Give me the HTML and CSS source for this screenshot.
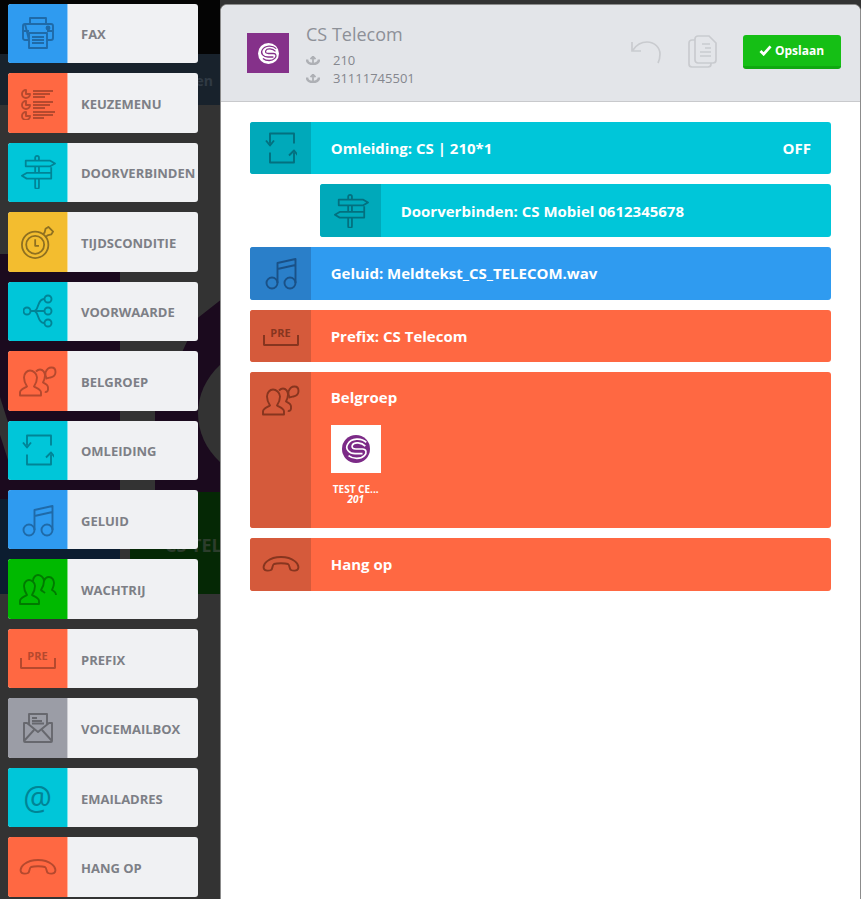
FILE: index.html
```html
<!DOCTYPE html>
<html lang="en">
  <head>
    <meta charset="UTF-8" />
    <meta name="viewport" content="width=device-width, initial-scale=1.0" />
    <title>Belplan</title>
    <link rel="stylesheet" href="styles.css">
  </head>
  <body>
    <svg class="sprite" width="0" height="0">
      <symbol id="i-fax" viewBox="0 0 32 34">
        <path d="M8 8V2h16v6M3 8h26a2 2 0 0 1 2 2v12a2 2 0 0 1-2 2h-4M7 24H3a2 2 0 0 1-2-2V10a2 2 0 0 1 2-2zM7 17h18v15H7zM10 21h12M10 24h12M10 27h12" />
        <path d="M2 15h5M25 15h5" />
        <circle cx="26" cy="12" r="1.500" fill="currentColor" />
      </symbol>
      <symbol id="i-menu" viewBox="0 0 38 32">
        <path d="M7 3a4 4 0 1 0 4 4H7zM14 4h20M14 7h17M14 10h12M7 14a4 4 0 1 0 4 4H7zM14 15h20M14 18h17M14 21h12M7 25a4 4 0 1 0 4 4H7zM14 25h22M14 28h20M14 31h11" />
      </symbol>
      <symbol id="i-sign" viewBox="0 0 38 36">
        <path d="M6 6h26l5 3-5 3H6zM33 13v6H7l-5 3 5 3h26v-6M16 6V3a2 2 0 0 1 4 0v3M16 25v9a2 2 0 0 0 4 0v-9M16 12v7M20 12v7" />
      </symbol>
      <symbol id="i-time" viewBox="0 0 36 36">
        <circle cx="15" cy="21" r="14" />
        <circle cx="15" cy="21" r="9.500" />
        <path d="M15 15v7h4M23 10l2-2 1-4 3-2 5 5-2 3-4 1-2 2" />
      </symbol>
      <symbol id="i-tree" viewBox="0 0 30 32">
        <circle cx="4" cy="16" r="3.500" />
        <circle cx="25" cy="4" r="3.500" />
        <circle cx="25" cy="16" r="3.500" />
        <circle cx="25" cy="28" r="3.500" />
        <path d="M8 16h13M21 4c-7 0-5 12-10 12M21 28c-7 0-5-12-10-12" />
      </symbol>
      <symbol id="i-group" viewBox="0 0 38 31">
        <path d="M1 30v-3c0-3 4-4 7-6-2-3-3-5-3-9 0-4 3-7 6-7s7 3 7 7c0 4-1 6-3 9 3 2 7 3 7 6v3zM17 6c1-1 2-2 4-2 3 0 5 3 5 6 0 3-1 5-2 7 2 1 5 2 5 5v2c0 2-2 3-3 2" />
        <path d="M27.500 13c-1-2-1.500-4-1-6 1-3 3.500-5 6-5s4 2 4 4.500c0 3-2.500 5-5 5.500-1.500.3-3 .5-4 1z" />
      </symbol>
      <symbol id="i-redirect" viewBox="0 0 32 31">
        <path d="M5 11V1h24v10M1 8l4 5 4-5M29 20v10H5V20M24 23l5-5 4 5" />
      </symbol>
      <symbol id="i-music" viewBox="0 0 32 34">
        <circle cx="7" cy="27" r="5.500" />
        <circle cx="25" cy="27" r="5.500" />
        <path d="M12.500 27V7L30.500 3v24M12.500 13l18-4" />
      </symbol>
      <symbol id="i-queue" viewBox="0 0 38 32">
        <path d="M1 31v-3c0-3 4-4 7-6-2-3-3-5-3-9 0-4 3-6 5-6s6 2 6 6c0 4-1 6-3 9 3 2 7 3 7 6v3zM14 8c0-4 3-6 5-6s6 2 6 6c0 4-1 6-3 9 1 1 3 2 4 3M25 8c1-3 3-4 5-4 3 0 5 3 5 6 0 3-1 5-2 7 2 1 4 2 4 5" />
      </symbol>
      <symbol id="i-mail" viewBox="0 0 32 30">
        <path d="M7 11V1h18v10M2 10h3l11 9 11-9h3v18a1 1 0 0 1-1 1H3a1 1 0 0 1-1-1zM2 28l10-11M30 28L20 17M10 5h5M10 8h10M10 10.500h12" />
      </symbol>
      <symbol id="i-phone" viewBox="0 0 38 16">
        <path d="M2 13c-2-5 5-12 17-12s19 7 17 12c-1 2-5 2-7 1-2-1-1-5-3-6-3-1-11-1-14 0-2 1-1 5-3 6-2 1-6 1-7-1z" />
      </symbol>
      <symbol id="i-anchor" viewBox="0 0 14 9">
        <path d="M7 1v6M4.500 3.200L7 .5 9.500 3.200" stroke-width="1.800" />
        <path d="M1 3.500C1 6.500 4 8 7 8s6-1.500 6-4.500" stroke-width="2.600" />
      </symbol>
      <symbol id="i-logo" viewBox="0 0 30 30">
        <circle cx="15" cy="15" r="15" fill="currentColor" stroke="none" />
        <path class="logo-cut" d="M26 8C21 3 10 3 6 10c-3 5 2 10 8 10h8M25 12c-4-4-12-5-14-1-1 3 1 4 4 4h7c4 0 5 4 2 7-4 4-12 4-17 0" />
      </symbol>
    </svg>

    <div class="backdrop">
      <div class="bg-black"></div>
      <div class="bg-navy">en</div>
      <div class="bg-purple">
        <div class="bg-shape"></div>
        <div class="bg-ring"></div>
        <div class="bg-edge"></div>
      </div>
      <div class="bg-blue"></div>
      <div class="bg-green">CS TEL</div>
    </div>

    <aside class="palette">
      <div class="tool tool-blue"><span class="tool-icon"><svg class="ico w32"><use href="#i-fax" /></svg></span><span class="tool-name">Fax</span></div>
      <div class="tool tool-orange"><span class="tool-icon"><svg class="ico w38"><use href="#i-menu" /></svg></span><span class="tool-name">Keuzemenu</span></div>
      <div class="tool tool-cyan"><span class="tool-icon"><svg class="ico w38"><use href="#i-sign" /></svg></span><span class="tool-name">Doorverbinden</span></div>
      <div class="tool tool-yellow"><span class="tool-icon"><svg class="ico w36"><use href="#i-time" /></svg></span><span class="tool-name">Tijdsconditie</span></div>
      <div class="tool tool-cyan"><span class="tool-icon"><svg class="ico w30"><use href="#i-tree" /></svg></span><span class="tool-name">Voorwaarde</span></div>
      <div class="tool tool-orange"><span class="tool-icon"><svg class="ico w38"><use href="#i-group" /></svg></span><span class="tool-name">Belgroep</span></div>
      <div class="tool tool-cyan"><span class="tool-icon"><svg class="ico w32"><use href="#i-redirect" /></svg></span><span class="tool-name">Omleiding</span></div>
      <div class="tool tool-blue"><span class="tool-icon"><svg class="ico w32"><use href="#i-music" /></svg></span><span class="tool-name">Geluid</span></div>
      <div class="tool tool-green"><span class="tool-icon"><svg class="ico w38"><use href="#i-queue" /></svg></span><span class="tool-name">Wachtrij</span></div>
      <div class="tool tool-orange"><span class="tool-icon"><span class="pre">PRE</span></span><span class="tool-name">Prefix</span></div>
      <div class="tool tool-gray"><span class="tool-icon"><svg class="ico w32"><use href="#i-mail" /></svg></span><span class="tool-name">Voicemailbox</span></div>
      <div class="tool tool-cyan"><span class="tool-icon"><span class="at">@</span></span><span class="tool-name">Emailadres</span></div>
      <div class="tool tool-orange"><span class="tool-icon"><svg class="ico w38 h16"><use href="#i-phone" /></svg></span><span class="tool-name">Hang op</span></div>
    </aside>

    <main class="panel">
      <header class="panel-head">
        <div class="head-logo"><svg class="logo-small"><use href="#i-logo" /></svg></div>
        <div class="head-info">
          <h1>CS Telecom</h1>
          <div class="head-line"><svg class="anchor"><use href="#i-anchor" /></svg>210</div>
          <div class="head-line"><svg class="anchor"><use href="#i-anchor" /></svg>31111745501</div>
        </div>
        <div class="head-actions">
          <svg class="act-undo" viewBox="0 0 31 24">
            <path d="M2 10C6 4 11 2 16 2c8 0 13 6 13 12 0 4-1 7-2 9M1 2v9h9" />
          </svg>
          <svg class="act-copy" viewBox="0 0 29 33">
            <path d="M7 5V4a3 3 0 0 1 3-3h11l7 7v17a3 3 0 0 1-3 3h-2M7 5H4a3 3 0 0 0-3 3v21a3 3 0 0 0 3 3h16a3 3 0 0 0 3-3v-1H10a3 3 0 0 1-3-3zM14 9h8M17 13h6M12 17h11M12 21h11" />
          </svg>
          <button class="save">
            <svg class="check" viewBox="0 0 14 12"><path d="M1.500 6.500l3.500 3.500 7.500-8.500" /></svg>Opslaan
          </button>
        </div>
      </header>

      <div class="flow">
        <div class="step step-cyan">
          <span class="step-icon"><svg class="ico w32"><use href="#i-redirect" /></svg></span>
          <div class="step-body"><span>Omleiding: CS | 210*1</span><span class="step-state">OFF</span></div>
        </div>
        <div class="step step-cyan step-child">
          <span class="step-icon"><svg class="ico w38"><use href="#i-sign" /></svg></span>
          <div class="step-body"><span>Doorverbinden: CS Mobiel 0612345678</span></div>
        </div>
        <div class="step step-blue">
          <span class="step-icon"><svg class="ico w32"><use href="#i-music" /></svg></span>
          <div class="step-body"><span>Geluid: Meldtekst_CS_TELECOM.wav</span></div>
        </div>
        <div class="step step-orange">
          <span class="step-icon"><span class="pre">PRE</span></span>
          <div class="step-body"><span>Prefix: CS Telecom</span></div>
        </div>
        <div class="step step-orange step-group">
          <span class="step-icon"><svg class="ico w38"><use href="#i-group" /></svg></span>
          <div class="step-body">
            <span>Belgroep</span>
            <div class="member">
              <div class="member-pic"><svg class="logo-large"><use href="#i-logo" /></svg></div>
              <div class="member-name">TEST CE...</div>
              <div class="member-num">201</div>
            </div>
          </div>
        </div>
        <div class="step step-orange">
          <span class="step-icon"><svg class="ico w38 h16"><use href="#i-phone" /></svg></span>
          <div class="step-body"><span>Hang op</span></div>
        </div>
      </div>
    </main>
  </body>
</html>
```

FILE: styles.css
```css
* {
  margin: 0;
  padding: 0;
  box-sizing: border-box;
}

html,
body {
  height: 899px;
  overflow: hidden;
}

body {
  font-family: "Open Sans", "Liberation Sans", sans-serif;
  background-color: #333;
  display: flex;
  position: relative;
}

.sprite {
  position: absolute;
}

/* dimmed page behind the editor */
.backdrop {
  position: absolute;
  top: 0;
  left: 0;
  width: 220px;
  height: 899px;
  overflow: hidden;
}

.bg-black {
  position: absolute;
  top: 0;
  left: 0;
  width: 100%;
  height: 54px;
  background-color: #040404;
}

.bg-navy {
  position: absolute;
  top: 54px;
  left: 0;
  width: 100%;
  height: 51px;
  background-color: #18222c;
  color: #303a44;
  font-size: 14px;
  font-weight: 700;
  line-height: 53px;
  text-align: right;
  padding-right: 7px;
}

.bg-purple {
  position: absolute;
  top: 254px;
  left: 0;
  width: 100%;
  height: 245px;
  background-color: #1b0a1e;
  overflow: hidden;
}

.bg-shape {
  position: absolute;
  top: 0;
  left: 120px;
  width: 100px;
  height: 245px;
  background-color: #333;
  clip-path: polygon(0 0, 100% 0, 100% 19%, 78% 26%, 35% 64%, 35% 100%, 0 100%);
}

.bg-ring {
  position: absolute;
  top: 91px;
  left: 198px;
  width: 150px;
  height: 137px;
  border-radius: 50%;
  background-color: #333;
}

.bg-edge {
  position: absolute;
  top: 143px;
  left: 0;
  width: 8px;
  height: 63px;
  background-color: #333;
  clip-path: polygon(0 0, 100% 40%, 100% 100%, 0 60%);
}

.bg-blue {
  position: absolute;
  top: 499px;
  left: 0;
  width: 120px;
  height: 95px;
  background-color: #0c1d30;
}

.bg-green {
  position: absolute;
  top: 492px;
  left: 130px;
  width: 90px;
  height: 102px;
  background-color: #052805;
  color: #2c3d2c;
  font-size: 18px;
  font-weight: 700;
  line-height: 106px;
  padding-left: 35px;
  white-space: nowrap;
  overflow: hidden;
}

/* left column */
.palette {
  position: relative;
  flex: 0 0 220px;
  padding: 3.61px 22px 0 8px;
}

.tool {
  display: flex;
  height: 59.49px;
  margin-bottom: 10px;
  background-color: #f0f1f3;
  border-radius: 3px;
  overflow: hidden;
}

.tool-icon {
  flex: 0 0 60px;
  display: flex;
  align-items: center;
  justify-content: center;
  border-right: 1px solid rgba(255, 255, 255, 0.5);
}

.tool-name {
  padding: 22.6px 0 0 13px;
  font-size: 13px;
  font-weight: 700;
  line-height: 16px;
  color: #7d7f86;
  text-transform: uppercase;
  white-space: nowrap;
}

.tool-blue .tool-icon { background-color: #2f9bf0; color: #1f6aa8; }
.tool-orange .tool-icon { background-color: #ff6842; color: #b5492e; }
.tool-cyan .tool-icon { background-color: #00c6d9; color: #008496; }
.tool-yellow .tool-icon { background-color: #f3bd2f; color: #8f7020; }
.tool-green .tool-icon { background-color: #00b900; color: #007a00; }
.tool-gray .tool-icon { background-color: #9b9da6; color: #67686e; }

.ico {
  fill: none;
  stroke: currentColor;
  stroke-width: 1.9;
  stroke-linejoin: round;
  height: 34px;
}

.w30 { width: 30px; }
.w32 { width: 32px; }
.w36 { width: 36px; }
.w38 { width: 38px; }
.h16 { height: 16px; }

.pre {
  display: block;
  width: 36px;
  font-size: 11px;
  font-weight: 700;
  line-height: 13px;
  text-align: center;
}

.pre::after {
  content: "";
  display: block;
  height: 9px;
  margin-top: -4px;
  border: 2px solid currentColor;
  border-top: none;
  border-radius: 0 0 2px 2px;
}

.at {
  font-size: 32px;
  line-height: 36px;
  font-weight: 400;
}

/* editor panel */
.panel {
  position: relative;
  flex: 1;
  margin-top: 4px;
  background-color: #fff;
  border: 1px solid #8c8c8c;
  border-bottom: none;
  border-radius: 7px 7px 0 0;
  overflow: hidden;
}

.panel-head {
  display: flex;
  align-items: flex-start;
  height: 97px;
  padding: 17px 19.5px 0 26px;
  background-color: #e3e5e9;
  border-bottom: 1px solid #c8c9cc;
}

.head-logo {
  flex: 0 0 42px;
  height: 40px;
  margin: 11px 17px 0 0;
  background-color: #85318a;
  display: flex;
  align-items: center;
  justify-content: center;
}

.logo-small {
  --cut: #85318a;
  width: 21px;
  height: 21px;
  color: #fff;
  fill: none;
}

.logo-cut {
  fill: none;
  stroke: var(--cut);
  stroke-width: 1.8;
}

.logo-large {
  --cut: #fff;
  width: 28px;
  height: 28px;
  color: #7c2a87;
  fill: none;
}

.head-info {
  flex: 1;
  color: #8d9098;
}

.head-info h1 {
  font-size: 18px;
  font-weight: 400;
  line-height: 24px;
  margin-bottom: 5px;
}

.head-line {
  display: flex;
  align-items: center;
  font-size: 13px;
  line-height: 18px;
  color: #85878e;
}

.anchor {
  width: 14px;
  height: 9px;
  margin-right: 13px;
  fill: none;
  stroke: #aeb0b5;
}

.head-actions {
  display: flex;
  align-items: flex-start;
  padding-top: 13px;
}

.act-undo {
  width: 31px;
  height: 24px;
  margin: 5px 26px 0 0;
  fill: none;
  stroke: #c9cbcf;
  stroke-width: 1.7;
}

.act-copy {
  width: 29px;
  height: 33px;
  margin: 0 26px 0 0;
  fill: none;
  stroke: #c9cbcf;
  stroke-width: 1.7;
}

.save {
  display: flex;
  align-items: center;
  justify-content: center;
  width: 98px;
  height: 34px;
  background-color: #15bf15;
  border: none;
  border-bottom: 3px solid #10a810;
  border-radius: 3px;
  color: #fff;
  font-family: inherit;
  font-size: 12px;
  font-weight: 700;
}

.check {
  width: 13px;
  height: 11px;
  margin-right: 3px;
  fill: none;
  stroke: #fff;
  stroke-width: 3;
}

/* call flow */
.flow {
  padding: 19.8px 29px 0 29.4px;
}

.step {
  display: flex;
  min-height: 52.6px;
  margin-bottom: 10px;
  border-radius: 3px;
  overflow: hidden;
  color: #fff;
  font-size: 15px;
  font-weight: 700;
  line-height: 20px;
}

.step-child {
  margin-left: 70px;
}

.step-group {
  min-height: 156px;
}

.step-icon {
  flex: 0 0 60.3px;
  display: flex;
  align-items: center;
  justify-content: center;
}

.step-group .step-icon {
  align-items: flex-start;
  padding-top: 11px;
}

.step-body {
  flex: 1;
  display: flex;
  align-items: center;
  justify-content: space-between;
  padding: 0 20px;
}

.step-group .step-body {
  display: block;
  padding-top: 15px;
}

.step-cyan { background-color: #00c6d9; }
.step-cyan .step-icon { background-color: #00a9ba; color: #03707f; }
.step-blue { background-color: #2f9bf0; }
.step-blue .step-icon { background-color: #2a7fc9; color: #1a5187; }
.step-orange { background-color: #ff6842; }
.step-orange .step-icon { background-color: #d55a3b; color: #87351f; }

.member {
  width: 50px;
  margin-top: 18px;
  text-align: center;
  font-size: 10px;
  line-height: 10px;
}

.member-pic {
  height: 48px;
  margin-bottom: 11px;
  background-color: #fff;
  display: flex;
  align-items: center;
  justify-content: center;
}

.member-name {
  white-space: nowrap;
}

.member-num {
  font-style: italic;
}
```
